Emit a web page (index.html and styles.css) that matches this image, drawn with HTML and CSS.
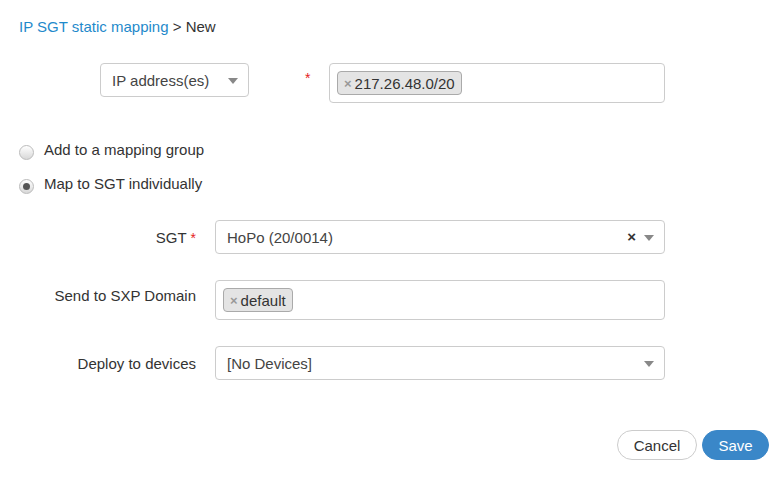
FILE: index.html
```html
<!DOCTYPE html>
<html>
<head>
<meta charset="utf-8">
<link rel="stylesheet" href="styles.css">
</head>
<body>
<div class="page">
  <div class="crumb"><a class="link">IP SGT static mapping</a> &gt; New</div>

  <div class="ip-row">
    <div class="select ip-select"><span>IP address(es)</span><span class="caret"></span></div>
    <span class="req ip-req">*</span>
    <div class="tagbox ip-box"><span class="tag"><span class="x">×</span>217.26.48.0/20</span></div>
  </div>

  <div class="radios">
    <label class="radio"><span class="dot"></span>Add to a mapping group</label>
    <label class="radio"><span class="dot on"></span>Map to SGT individually</label>
  </div>

  <div class="form">
    <div class="row center">
      <div class="label">SGT <span class="req">*</span></div>
      <div class="select field"><span>HoPo (20/0014)</span><span class="clear">×</span><span class="caret"></span></div>
    </div>
    <div class="row top">
      <div class="label lbl-top">Send to SXP Domain</div>
      <div class="tagbox field"><span class="tag"><span class="x">×</span>default</span></div>
    </div>
    <div class="row center">
      <div class="label">Deploy to devices</div>
      <div class="select field"><span>[No Devices]</span><span class="caret"></span></div>
    </div>
  </div>

  <div class="actions">
    <button class="btn cancel">Cancel</button>
    <button class="btn save">Save</button>
  </div>
</div>
</body>
</html>
```
FILE: styles.css
```css
* { box-sizing: border-box; }
body {
  margin: 0;
  font-family: "Liberation Sans", Arial, sans-serif;
  font-size: 15px;
  color: #333;
  background: #fff;
}
.page { padding: 18px 12px 0 19px; width: 781px; }
.crumb { height: 18px; line-height: 18px; color: #333; }
.link { color: #1f8acb; }

.ip-row { display: flex; align-items: flex-start; margin-top: 27px; padding-left: 81px; }
.select {
  display: flex; align-items: center;
  height: 34px;
  border: 1px solid #ccc;
  border-radius: 4px;
  padding: 0 10px 0 11px;
  color: #444;
  background: #fff;
}
.select > span:first-child { flex: 1; }
.caret {
  width: 0; height: 0;
  border-left: 5px solid transparent;
  border-right: 5px solid transparent;
  border-top: 6px solid #888;
  margin-left: 8px;
  margin-top: 2px;
}
.clear { font-weight: bold; color: #333; font-size: 15px; margin-top: -1px; }
.ip-select { width: 149px; }
.req { color: #e52222; font-size: 14px; }
.ip-req { margin: 8px 0 0 56px; width: 24px; line-height: 14px; }
.tagbox {
  height: 40px;
  border: 1px solid #ccc;
  border-radius: 4px;
  padding: 7px 7px;
  background: #fff;
}
.ip-box { width: 336px; }
.tag {
  display: inline-flex; align-items: center;
  height: 24px;
  background: #e4e4e4;
  border: 1px solid #aaa;
  border-radius: 4px;
  padding: 0 6px 0 6px;
  color: #333;
  font-size: 15px;
}
.tag .x { color: #999; font-weight: bold; font-size: 13px; margin-right: 3px; }

.radios { margin-top: 38px; display: flex; flex-direction: column; gap: 17px; }
.radio { display: flex; align-items: center; height: 17px; color: #333; }
.dot {
  width: 15px; height: 15px; border-radius: 50%;
  border: 1px solid #bbb;
  background: linear-gradient(#fff, #d8d8d8);
  margin-right: 10px;
  margin-top: 5px;
  display: flex; align-items: center; justify-content: center;
}
.dot.on::after {
  content: ""; width: 7px; height: 7px; border-radius: 50%; background: #555;
}

.form { margin-top: 28px; display: flex; flex-direction: column; gap: 26px; }
.row { display: flex; }
.row.center { align-items: center; }
.row.top { align-items: flex-start; }
.label { width: 196px; padding-right: 19px; text-align: right; color: #333; }
.lbl-top { padding-top: 7px; }
.field { width: 450px; }

.actions { display: flex; justify-content: flex-end; gap: 5px; margin-top: 50px; }
.btn {
  height: 30px;
  border-radius: 15px;
  font-family: "Liberation Sans", Arial, sans-serif;
  font-size: 15px;
  padding: 0 14px;
}
.cancel { background: #fff; border: 1px solid #ccc; color: #333; width: 80px; }
.save { background: #3a87c8; border: 1px solid #3a87c8; color: #fff; width: 67px; }
```
